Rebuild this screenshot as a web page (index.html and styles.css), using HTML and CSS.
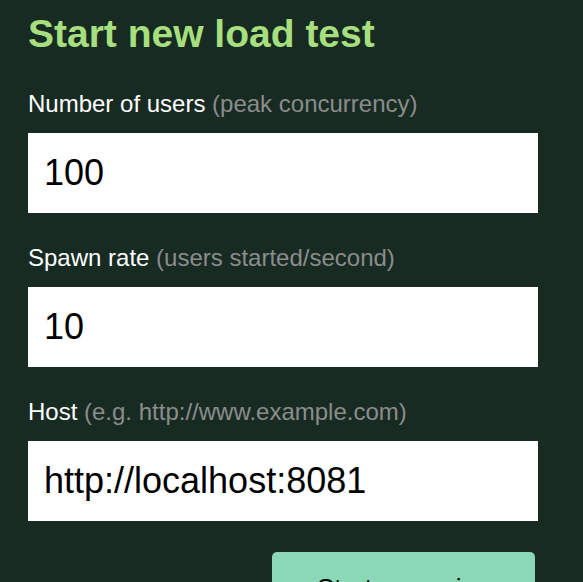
FILE: index.html
```html
<!DOCTYPE html>
<html>
<head>
<meta charset="utf-8">
<link rel="stylesheet" href="styles.css">
</head>
<body>
<main class="panel">
  <h2 class="title">Start new load test</h2>
  <form class="form">
    <div class="field">
      <label class="label" for="users">Number of users <span class="hint">(peak concurrency)</span></label>
      <input class="input" id="users" type="text" value="100">
    </div>
    <div class="field">
      <label class="label" for="rate">Spawn rate <span class="hint">(users started/second)</span></label>
      <input class="input" id="rate" type="text" value="10">
    </div>
    <div class="field">
      <label class="label" for="host">Host <span class="hint">(e.g. http://www.example.com)</span></label>
      <input class="input" id="host" type="text" value="http://localhost:8081">
    </div>
    <div class="actions">
      <button class="button" type="button">Start swarming</button>
    </div>
  </form>
</main>
</body>
</html>
```
FILE: styles.css
```css
html, body {
  margin: 0;
  padding: 0;
  background: #172b23;
  font-family: "Liberation Sans", Arial, sans-serif;
}
.panel {
  padding: 12px 45px 0 28px;
  width: 510px;
}
.title {
  margin: 0;
  font-size: 39px;
  line-height: 44px;
  font-weight: bold;
  color: #a7df7e;
}
.form {
  display: flex;
  flex-direction: column;
  gap: 31px;
  margin-top: 34px;
}
.field {
  display: flex;
  flex-direction: column;
  gap: 15px;
}
.label {
  font-size: 24px;
  line-height: 28px;
  color: #ffffff;
}
.hint {
  color: #8c8c8c;
}
.input {
  box-sizing: border-box;
  width: 510px;
  height: 80px;
  border: none;
  margin: 0;
  padding: 0 16px;
  font-family: "Liberation Sans", Arial, sans-serif;
  font-size: 36px;
  color: #000;
  background: #fff;
  outline: none;
}
.actions {
  display: flex;
  justify-content: flex-end;
  padding-right: 3px;
}
.button {
  box-sizing: border-box;
  width: 263px;
  border: none;
  border-radius: 5px;
  background: #8ad8b8;
  color: #000;
  font-family: "Liberation Sans", Arial, sans-serif;
  font-size: 26px;
  line-height: 30px;
  text-align: left;
  padding: 21px 0 29px 45px;
  display: block;
}
```
